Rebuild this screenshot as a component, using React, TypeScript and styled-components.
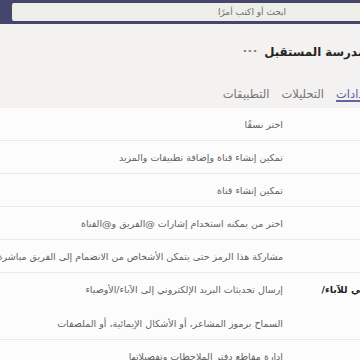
import styled, { createGlobalStyle } from "styled-components"

const GlobalStyle = createGlobalStyle`
  html, body {
    margin: 0;
    padding: 0;
    background: #f3f2f1;
  }
  body {
    font-family: "Segoe UI", "DejaVu Sans", "Noto Sans", sans-serif;
  }
`

const Viewport = styled.div`
  width: 360px;
  height: 360px;
  overflow: hidden;
  background: #f3f2f1;
`

const Frame = styled.div`
  width: 500px;
  direction: rtl;
`

const TopBar = styled.header`
  height: 24px;
  background: #45466d;
  display: flex;
  align-items: center;
  padding: 0 8px 0 12px;
  box-sizing: border-box;
`

const SearchBox = styled.div`
  flex: 1;
  height: 18px;
  background: #edeee8;
  border-radius: 2px;
  display: flex;
  align-items: center;
  justify-content: center;
  font-size: 9px;
  color: #6e6e6e;
`

const Header = styled.div`
  padding: 18px 119px 0 0;
`

const Title = styled.h1`
  margin: 0;
  padding-right: 16px;
  font-size: 11.8px;
  line-height: 20px;
  font-weight: 700;
  color: #252423;
  display: flex;
  align-items: center;
  gap: 6px;
`

const More = styled.span`
  font-size: 11px;
  color: #7a7a7a;
  letter-spacing: 1px;
`

const Tabs = styled.nav`
  display: flex;
  gap: 12px;
  margin-top: 26px;
`

const Tab = styled.span<{ $active?: boolean }>`
  font-size: 11.5px;
  line-height: 12px;
  color: ${(p) => (p.$active ? "#5b5e9e" : "#737373")};
  border-bottom: 2px solid ${(p) => (p.$active ? "#6264a7" : "transparent")};
`

const Content = styled.main`
  margin-top: 6px;
  background: #fcfcfc;
`

const Section = styled.section`
  display: grid;
  grid-template-columns: 190px 1fr;
  border-bottom: 1px solid #e9e9e9;
  padding: 10px 0 8px;
`

const Label = styled.div`
  padding-right: 32px;
  font-size: 9.5px;
  line-height: 14px;
  font-weight: 700;
  color: #252423;
`

const Items = styled.div`
  display: flex;
  flex-direction: column;
  gap: 20px;
  padding-right: 27px;
`

const Item = styled.div`
  font-size: 9.5px;
  line-height: 14px;
  color: #636363;
  white-space: nowrap;
`

const sections = [
  { label: "النسق", items: ["اختر نسقًا"] },
  { label: "أذونات الأعضاء", items: ["تمكين إنشاء قناة وإضافة تطبيقات والمزيد"] },
  { label: "أذونات الضيف", items: ["تمكين إنشاء قناة"] },
  { label: "@الإشارات", items: ["اختر من يمكنه استخدام إشارات @الفريق و@القناة"] },
  {
    label: "رمز الفريق",
    items: [
      "مشاركة هذا الرمز حتى يتمكن الأشخاص من الانضمام إلى الفريق مباشرة - لن تتلقى طلبات الانضمام",
    ],
  },
  {
    label: "تحديثات البريد الإلكتروني للآباء/ الأوصياء",
    items: [
      "إرسال تحديثات البريد الإلكتروني إلى الآباء/الأوصياء",
      "السماح برموز المشاعر، أو الأشكال الإيمائية، أو الملصقات",
    ],
  },
  { label: "المحتوى المفوض من", items: ["إدارة مقاطع دفتر الملاحظات وتفصيلاتها"] },
]

const App: React.FC = () => {
  return (
    <Viewport>
      <GlobalStyle />
      <Frame>
        <TopBar>
          <SearchBox>ابحث أو اكتب أمرًا</SearchBox>
        </TopBar>
        <Header>
          <Title>
            مدرسة المستقبل <More>···</More>
          </Title>
          <Tabs>
            <Tab $active>الإعدادات</Tab>
            <Tab>التحليلات</Tab>
            <Tab>التطبيقات</Tab>
          </Tabs>
        </Header>
        <Content>
          {sections.map((s) => (
            <Section key={s.label}>
              <Label>{s.label}</Label>
              <Items>
                {s.items.map((item) => (
                  <Item key={item}>{item}</Item>
                ))}
              </Items>
            </Section>
          ))}
        </Content>
      </Frame>
    </Viewport>
  )
}

export default App
